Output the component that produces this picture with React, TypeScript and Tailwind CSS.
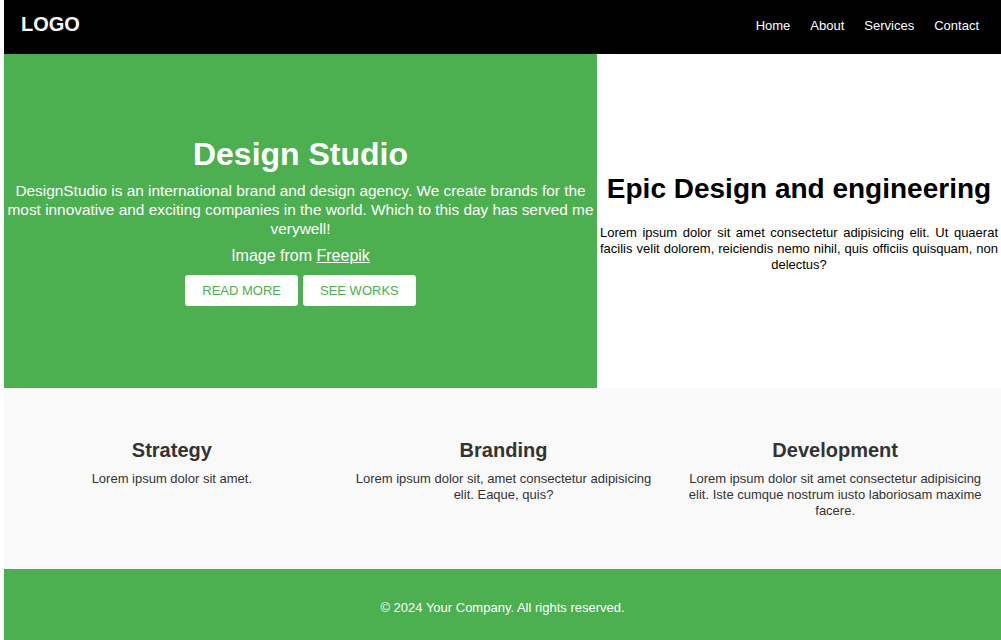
import React from "react";

const font = { fontFamily: '"Liberation Sans", Arial, sans-serif' };

export default function App() {
  return (
    <div className="w-[1001px] h-[640px] overflow-hidden bg-white pl-[4px]" style={font}>
      <header className="h-[54px] bg-black flex items-center justify-between pl-[17px] pr-[22px]">
        <div className="text-white font-bold text-[20px] leading-[23px] -mt-[5px]">LOGO</div>
        <nav className="flex items-center gap-[20px] text-white text-[13px] leading-[15px] -mt-[3px]">
          <a className="text-white">Home</a>
          <a className="text-white">About</a>
          <a className="text-white">Services</a>
          <a className="text-white">Contact</a>
        </nav>
      </header>

      <section className="flex h-[334px]">
        <div className="w-[593px] bg-[#4caf50] flex flex-col items-center justify-center text-white text-center">
          <h1 className="text-[32px] font-bold leading-[37px]">Design Studio</h1>
          <p className="mt-[8px] text-[15.4px] leading-[19px]">
            DesignStudio is an international brand and design agency. We create brands for the most innovative and exciting companies in the world. Which to this day has served me verywell!
          </p>
          <p className="mt-[8px] text-[16px] leading-[19px]">
            Image from <a className="underline">Freepik</a>
          </p>
          <div className="mt-[10px] flex gap-[5px]">
            <button className="h-[31px] px-[17px] bg-white text-[#4caf50] text-[13px] rounded-[3px] uppercase">Read More</button>
            <button className="h-[31px] px-[17px] bg-white text-[#4caf50] text-[13px] rounded-[3px] uppercase">See Works</button>
          </div>
        </div>
        <div className="flex-1 flex flex-col items-center justify-center text-black px-[3px] pt-[4px]">
          <h2 className="text-[28px] font-bold leading-[32px] text-center whitespace-nowrap">Epic Design and engineering</h2>
          <p className="mt-[20px] text-[13px] leading-[16px] text-justify [text-align-last:center]">
            Lorem ipsum dolor sit amet consectetur adipisicing elit. Ut quaerat facilis velit dolorem, reiciendis nemo nihil, quis officiis quisquam, non delectus?
          </p>
        </div>
      </section>

      <section className="h-[181px] bg-[#f9f9f9] grid grid-cols-3 pt-[51px] pl-[2px] text-[#333]">
        {[
          ["Strategy", "Lorem ipsum dolor sit amet."],
          ["Branding", "Lorem ipsum dolor sit, amet consectetur adipisicing elit. Eaque, quis?"],
          ["Development", "Lorem ipsum dolor sit amet consectetur adipisicing elit. Iste cumque nostrum iusto laboriosam maxime facere."],
        ].map(([t, d]) => (
          <div key={t} className="px-[17px] text-center">
            <h3 className="text-[20px] font-bold leading-[23px]">{t}</h3>
            <p className="mt-[9px] text-[13px] leading-[16px]">{d}</p>
          </div>
        ))}
      </section>

      <footer className="h-[71px] bg-[#4caf50] text-white text-center text-[13px] leading-[15px] pt-[31px]">
        © 2024 Your Company. All rights reserved.
      </footer>
    </div>
  );
}
